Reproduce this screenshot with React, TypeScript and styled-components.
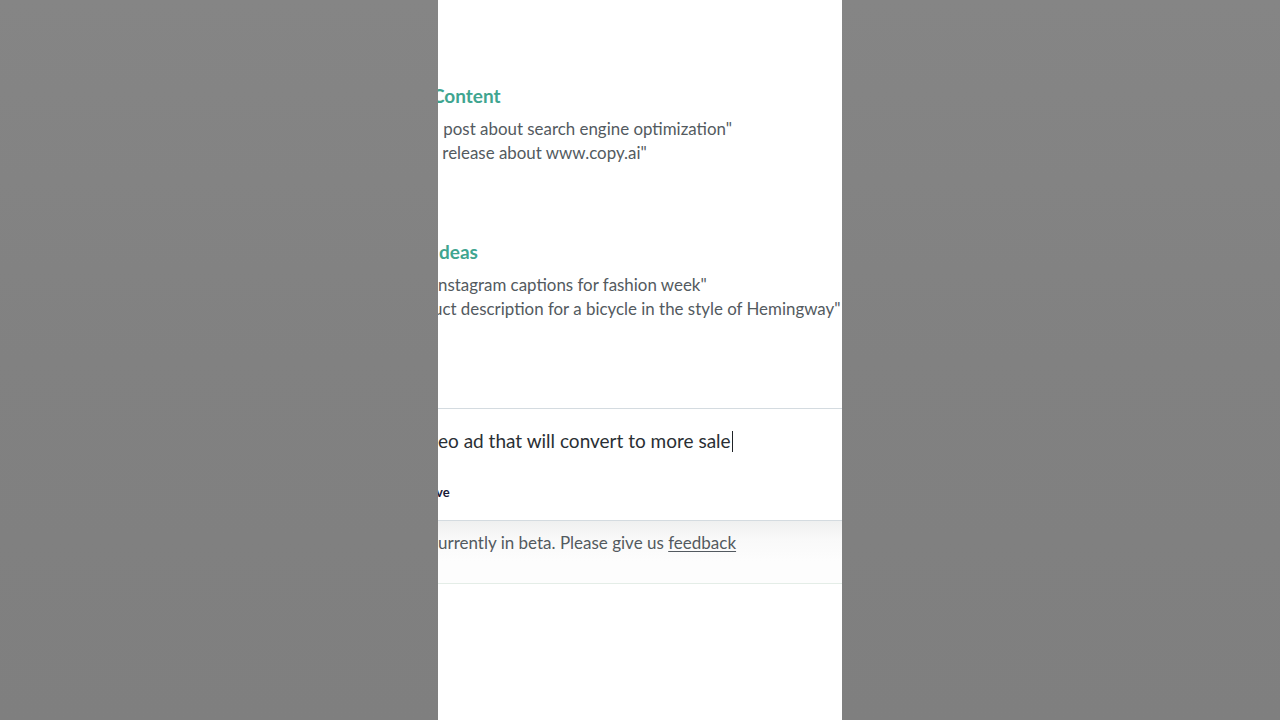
import React from "react";
import styled, { createGlobalStyle } from "styled-components";

const Global = createGlobalStyle`
  html, body, #root { margin: 0; padding: 0; height: 100%; }
  body {
    background: #828282;
    font-family: Lato, "Noto Sans", Arial, sans-serif;
    overflow: hidden;
  }
`;

const Stage = styled.div`
  display: flex;
  justify-content: center;
  height: 720px;
  width: 1280px;
  background: linear-gradient(180deg, #858585 0%, #818181 50%, #7f7f7f 100%);
`;

const Panel = styled.main`
  width: 404px;
  height: 720px;
  background: #ffffff;
  overflow: hidden;
  display: flex;
  flex-direction: column;
`;

const Examples = styled.div`
  display: flex;
  flex-direction: column;
  gap: 76px;
  padding-top: 84px;
`;

const Section = styled.section`
  display: flex;
  flex-direction: column;
`;

const Heading = styled.h2<{ $shift?: number }>`
  margin: 0 0 9px ${(p) => p.$shift ?? 0}px;
  font-size: 19px;
  line-height: 24px;
  font-weight: 700;
  color: #3fa590;
  white-space: pre;
`;

const Example = styled.p<{ $shift?: number }>`
  margin: 0 0 0 ${(p) => p.$shift ?? 0}px;
  font-size: 16.9px;
  line-height: 23.5px;
  color: #535a60;
  white-space: pre;
`;

const Composer = styled.div`
  margin-top: 88px;
  border-top: 1.5px solid #d4dbe0;
  border-bottom: 1.5px solid #d4dbe0;
  padding: 20px 0 20px;
  display: flex;
  flex-direction: column;
  gap: 31px;
`;

const Prompt = styled.div`
  display: flex;
  align-items: center;
  font-size: 19px;
  line-height: 24px;
  color: #2a2f34;
  white-space: pre;
`;

const Caret = styled.span`
  display: inline-block;
  width: 1px;
  height: 21px;
  background: #1f2327;
  margin-left: 1px;
`;

const ModeLabel = styled.span<{ $shift?: number }>`
  margin-left: ${(p) => p.$shift ?? 0}px;
  font-size: 13px;
  line-height: 16px;
  font-weight: 700;
  color: #1a1a38;
`;

const Footer = styled.footer`
  padding: 11px 0 29px;
  border-bottom: 1px solid #e4ede7;
  background: linear-gradient(180deg, #eff0f0 0px, #f9f9f9 18px, #fdfdfd 40px);
  font-size: 17px;
  line-height: 22px;
  color: #535a60;
  white-space: pre;
`;

const FeedbackLink = styled.a`
  color: #535a60;
  text-decoration: underline;
  text-underline-offset: 2px;
`;

export default function App() {
  return (
    <>
      <Global />
      <Stage>
        <Panel>
          <Examples>
            <Section>
              <Heading $shift={-6}>Content</Heading>
              <Example $shift={1}> post about search engine optimization"</Example>
              <Example> release about www.copy.ai"</Example>
            </Section>
            <Section>
              <Heading $shift={1}>deas</Heading>
              <Example>nstagram captions for fashion week"</Example>
              <Example $shift={-5}>uct description for a bicycle in the style of Hemingway"</Example>
            </Section>
          </Examples>
          <Composer>
            <Prompt>
              eo ad that will convert to more sale
              <Caret />
            </Prompt>
            <ModeLabel $shift={-2}>ve</ModeLabel>
          </Composer>
          <Footer>
            urrently in beta. Please give us <FeedbackLink href="#">feedback</FeedbackLink>
          </Footer>
        </Panel>
      </Stage>
    </>
  );
}
